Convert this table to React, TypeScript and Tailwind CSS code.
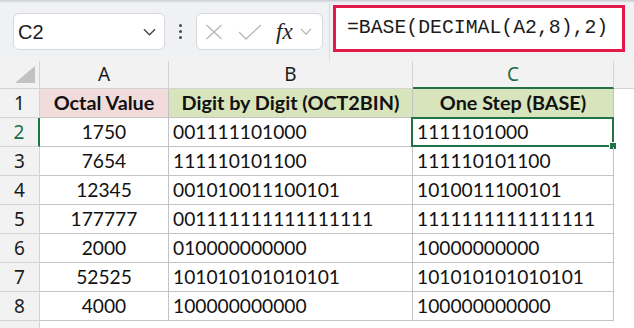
import React from "react";

const rows: [string, string, string][] = [
  ["1750", "001111101000", "1111101000"],
  ["7654", "111110101100", "111110101100"],
  ["12345", "001010011100101", "1010011100101"],
  ["177777", "001111111111111111", "1111111111111111"],
  ["2000", "010000000000", "10000000000"],
  ["52525", "101010101010101", "101010101010101"],
  ["4000", "100000000000", "100000000000"],
];

const cellFont = { fontFamily: "Lato, 'Noto Sans', sans-serif" };
const uiFont = { fontFamily: "'Noto Sans', 'Open Sans', sans-serif" };

function Chevron({ className }: { className?: string }) {
  return (
    <svg viewBox="0 0 14 8" className={className} fill="none">
      <path d="M1 1l6 6 6-6" stroke="currentColor" strokeWidth="1.4" />
    </svg>
  );
}

function Toolbar() {
  return (
    <div className="relative flex h-[61px] items-start bg-[#eff1f3]">
      <div className="absolute inset-x-0 top-0 h-[3px] bg-gradient-to-b from-[#c9ccd0] to-[#eff1f3]" />
      <div
        className="ml-[13px] mt-[13px] flex h-[37px] w-[152px] items-center justify-between rounded-[6px] border border-[#d6d8db] bg-white pl-[4px] pr-[8px] text-[20px] text-[#1b1b1b]"
        style={{ fontFamily: "'Liberation Sans', Arial, sans-serif" }}
      >
        <span>C2</span>
        <Chevron className="h-[8px] w-[13px] text-[#444]" />
      </div>
      <div className="mt-[24px] flex w-[31px] flex-col items-center gap-[3px]">
        <span className="h-[3px] w-[3px] rounded-full bg-[#4a4a4a]" />
        <span className="h-[3px] w-[3px] rounded-full bg-[#4a4a4a]" />
        <span className="h-[3px] w-[3px] rounded-full bg-[#4a4a4a]" />
      </div>
      <div className="mt-[13px] flex h-[37px] w-[127px] items-center rounded-[6px] border border-[#d6d8db] bg-white">
        <svg viewBox="0 0 18 16" className="ml-[8px] h-[16px] w-[18px]" fill="none">
          <path d="M1.5 1l15 14M16.5 1l-15 14" stroke="#b9b9b9" strokeWidth="1.4" />
        </svg>
        <svg viewBox="0 0 24 16" className="ml-[15px] h-[16px] w-[24px]" fill="none">
          <path d="M1 8l7 7L23 1" stroke="#b9b9b9" strokeWidth="1.4" />
        </svg>
        <span
          className="ml-[14px] text-[23px] italic leading-none text-[#222]"
          style={{ fontFamily: "'Liberation Serif', 'Times New Roman', serif" }}
        >
          fx
        </span>
        <Chevron className="ml-[7px] h-[7px] w-[12px] text-[#b0b0b0]" />
      </div>
      <div className="ml-[6px] h-[61px] w-px bg-[#dcdee1]" />
      <div
        className="ml-[3px] mt-[5px] flex h-[47px] w-[292px] items-center border-[3px] border-[#e2194b] bg-white pl-[11px] text-[19.8px] text-[#1a1a1a]"
        style={{ fontFamily: "'Liberation Mono', 'DejaVu Sans Mono', monospace" }}
      >
        =BASE(DECIMAL(A2,8),2)
      </div>
    </div>
  );
}

export default function App() {
  const head = "flex items-center justify-center border-r border-b border-[#d4d4d4] bg-[#f2f2f2] text-[19px] text-[#1b1b1b]";
  const cell = "flex items-center border-r border-b border-[#c3c3c3] text-[19.2px] text-[#111]";
  return (
    <div className="h-[328px] w-[634px] overflow-hidden bg-white">
      <Toolbar />
      <div
        className="grid grid-cols-[40px_129px_244px_201px_1fr] grid-rows-[28px_repeat(9,29px)]"
        style={uiFont}
      >
        <div className={`${head} relative`}>
          <svg viewBox="0 0 20 17" className="absolute bottom-[5px] right-[4px] h-[17px] w-[20px]">
            <polygon points="20,0 20,17 0,17" fill="#c2c2c2" />
          </svg>
        </div>
        <div className={head}>A</div>
        <div className={head}>B</div>
        <div className={`${head} border-b-2 border-b-[#217346] bg-[#dcdcdc] text-[#1e6e42]`}>C</div>
        <div className="border-b border-[#d4d4d4] bg-[#f2f2f2]" />

        <div className={head}>1</div>
        <div className={`${cell} justify-center bg-[#f2dcdb] text-[19.8px] font-bold`} style={cellFont}>
          Octal Value
        </div>
        <div className={`${cell} justify-center bg-[#d8e4bc] text-[19.8px] font-bold`} style={cellFont}>
          Digit by Digit (OCT2BIN)
        </div>
        <div className={`${cell} justify-center bg-[#d8e4bc] text-[19.8px] font-bold`} style={cellFont}>
          One Step (BASE)
        </div>
        <div />

        {rows.map((r, i) => {
          const n = i + 2;
          const sel = n === 2;
          return (
            <React.Fragment key={n}>
              <div
                className={
                  sel
                    ? `${head} border-r-2 border-r-[#217346] bg-[#d6d6d6] text-[#1e6e42]`
                    : head
                }
              >
                {n}
              </div>
              <div className={`${cell} justify-center`} style={cellFont}>
                {r[0]}
              </div>
              <div className={`${cell} pl-[4px]`} style={cellFont}>
                {r[1]}
              </div>
              <div className={`${cell} relative pl-[4px]`} style={cellFont}>
                {r[2]}
                {sel && (
                  <div className="absolute -left-[2px] -top-[1px] -right-[1px] -bottom-[1px] border-2 border-[#217346]">
                    <div className="absolute -bottom-[5px] -right-[5px] h-[8px] w-[8px] border border-white bg-[#217346]" />
                  </div>
                )}
              </div>
              <div />
            </React.Fragment>
          );
        })}
        <div className={head} />
      </div>
    </div>
  );
}
